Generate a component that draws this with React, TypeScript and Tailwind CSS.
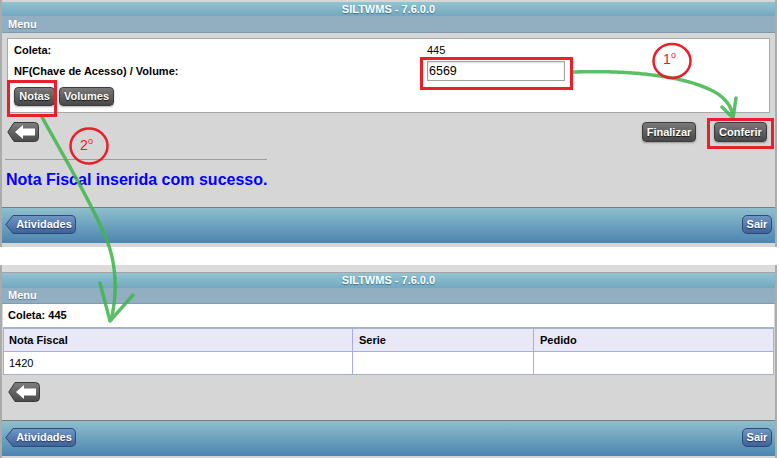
import React from 'react';

function TitleBar({ h, top }: { h: string; top?: boolean }) {
    return (
        <div className={`${h} ${top ? 'border-t border-[#a3a3a3]' : ''} bg-gradient-to-b from-[#93c3d1] to-[#73a8bf] flex items-center justify-center text-[11px] font-bold text-white leading-none [text-shadow:0_1px_1px_#3d6f86]`}>
            SILTWMS - 7.6.0.0
        </div>
    );
}

function MenuBar({ h }: { h: string }) {
    return (
        <div className={`${h} bg-[#92afc1] border-b border-[#7f9bb0] flex items-center pl-[6px] text-[11px] font-bold text-white leading-none [text-shadow:0_1px_1px_#55758a]`}>
            Menu
        </div>
    );
}

function GrayBtn({ label, w, h = 'h-[20px]' }: { label: string; w: string; h?: string }) {
    return (
        <div className={`${w} ${h} rounded-[4px] border border-[#3c3c3c] bg-gradient-to-b from-[#7a7a7a] to-[#484848] flex items-center justify-center text-[11px] font-bold text-white leading-none [text-shadow:0_1px_1px_#111] shadow-[0_1px_2px_rgba(0,0,0,0.3)]`}>
            {label}
        </div>
    );
}

function BackBtn({ id }: { id: string }) {
    return (
        <svg width="32" height="20" viewBox="0 0 32 20">
            <defs>
                <linearGradient id={id} x1="0" y1="0" x2="0" y2="1">
                    <stop offset="0" stopColor="#7e7e7e" />
                    <stop offset="1" stopColor="#4a4a4a" />
                </linearGradient>
            </defs>
            <path d="M0.8 10 L7 0.5 H27.5 Q31.5 0.5 31.5 4.5 V15.5 Q31.5 19.5 27.5 19.5 H7 Z" fill={`url(#${id})`} stroke="#3a3a3a" />
            <polygon points="8,10 16,3 16,6.5 28,6.5 28,13.5 16,13.5 16,17" fill="#ffffff" />
        </svg>
    );
}

function BlueBack({ id }: { id: string }) {
    return (
        <div className="flex h-[19px]">
            <svg width="8" height="19" viewBox="0 0 8 19" className="block">
                <defs>
                    <linearGradient id={id} x1="0" y1="0" x2="0" y2="1">
                        <stop offset="0" stopColor="#7096c4" />
                        <stop offset="1" stopColor="#3f6399" />
                    </linearGradient>
                </defs>
                <polygon points="8,0 0.5,9.5 8,19" fill={`url(#${id})`} />
                <polyline points="8,0.5 0.8,9.5 8,18.5" fill="none" stroke="#2d4b79" />
            </svg>
            <div className="h-[19px] w-[63px] border-y border-r border-[#2d4b79] rounded-r-[5px] bg-gradient-to-b from-[#7096c4] to-[#3f6399] flex items-center justify-center text-[11px] font-bold text-white leading-none [text-shadow:0_1px_1px_#1d3357]">
                Atividades
            </div>
        </div>
    );
}

function Sair() {
    return (
        <div className="w-[30px] h-[19px] rounded-[5px] border border-[#2d4b79] bg-gradient-to-b from-[#7096c4] to-[#3f6399] flex items-center justify-center text-[11px] font-bold text-white leading-none [text-shadow:0_1px_1px_#1d3357]">
            Sair
        </div>
    );
}

function Footer({ id }: { id: string }) {
    return (
        <div className="h-[36px] border-t border-[#7b7b7b] bg-gradient-to-b from-[#8fbfcd] to-[#4b85b0] flex items-start justify-between pt-[7px] pl-[3px] pr-[3px]">
            <BlueBack id={id} />
            <Sair />
        </div>
    );
}

function ScreenOne() {
    return (
        <div className="w-[777px] h-[247px] border-x-2 border-[#ababab] bg-[#d6d6d6] flex flex-col">
            <div className="h-[2px]" />
            <TitleBar h="h-[14px]" />
            <MenuBar h="h-[17px]" />
            <div className="h-[174px] flex flex-col pt-[5px]">
                <div className="ml-[5px] w-[763px] h-[75px] bg-white border border-[#a8a8a8] pt-[3px] pl-[6px] text-[11px] text-black leading-none">
                    <div className="grid grid-cols-[413px_1fr] h-[16px] items-center">
                        <span className="font-bold">Coleta:</span>
                        <span>445</span>
                    </div>
                    <div className="grid grid-cols-[413px_1fr] h-[22px] mt-[2px] items-center">
                        <span className="font-bold">NF(Chave de Acesso) / Volume:</span>
                        <div className="w-[138px] h-[20px] border border-[#a3a3a3] bg-white shadow-[inset_0_1px_2px_rgba(0,0,0,0.15)] flex items-center pl-[1px] text-[12.5px]">
                            6569
                        </div>
                    </div>
                    <div className="flex gap-[4px] mt-[5px]">
                        <GrayBtn label="Notas" w="w-[41px]" h="h-[19px]" />
                        <GrayBtn label="Volumes" w="w-[55px]" h="h-[19px]" />
                    </div>
                </div>
                <div className="flex items-start justify-between pt-[9px] pl-[5px] pr-[8px]">
                    <BackBtn id="bk1" />
                    <div className="flex gap-[18px]">
                        <GrayBtn label="Finalizar" w="w-[54px]" />
                        <GrayBtn label="Conferir" w="w-[53px]" />
                    </div>
                </div>
                <div className="ml-[3px] mt-[17px] w-[262px] h-[1px] bg-[#9c9c9c]" />
                <div className="ml-[4px] mt-[11px] text-[16px] leading-[18px] font-bold text-[#0000ff]">
                    Nota Fiscal inserida com sucesso.
                </div>
            </div>
            <Footer id="at1" />
            <div className="h-[4px]" />
        </div>
    );
}

function ScreenTwo() {
    const cell = 'border-r border-[#a9a9ec] pl-[5px] flex items-center';
    return (
        <div className="w-[777px] h-[193px] border-x-2 border-[#ababab] bg-[#d6d6d6] flex flex-col">
            <div className="h-[7px] bg-[#dcdcdc]" />
            <TitleBar h="h-[16px]" top />
            <MenuBar h="h-[16px]" />
            <div className="mx-[1px] h-[25px] bg-white border-b-2 border-[#a3b5c6] flex items-center pl-[5px] text-[11px] font-bold text-black leading-none">
                Coleta: 445
            </div>
            <div className="mx-[1px] text-[11px] text-black leading-none border-l border-[#a9a9ec]">
                <div className="grid grid-cols-[349px_181px_1fr] h-[23px] bg-[#e8e8f6] border-b border-[#a9a9ec] font-bold">
                    <div className={cell}>Nota Fiscal</div>
                    <div className={`${cell} pl-[6px]`}>Serie</div>
                    <div className={`${cell} pl-[6px]`}>Pedido</div>
                </div>
                <div className="grid grid-cols-[349px_181px_1fr] h-[23px] bg-white border-b border-[#a3b3c6]">
                    <div className={cell}>1420</div>
                    <div className={cell} />
                    <div className={cell} />
                </div>
            </div>
            <div className="h-[45px] pt-[7px] pl-[6px]">
                <BackBtn id="bk2" />
            </div>
            <Footer id="at2" />
            <div className="h-[2px]" />
        </div>
    );
}

function Annotations() {
    const green = '#3fb54c';
    return (
        <svg className="absolute left-0 top-0 pointer-events-none" width="779" height="458" viewBox="0 0 779 458">
            <g fill="none" stroke={green} strokeWidth="3.5" strokeLinecap="round" strokeLinejoin="round" strokeDasharray="2.5 1.2" opacity="0.85">
                <path d="M574 72 C 630 70, 690 76, 718 94 C 728 101, 733 110, 733 118" />
                <path d="M722 107 L733 118 L736 98" />
                <path d="M42 117 C 60 150, 90 200, 106 238 C 116 262, 118 292, 111 320" />
                <path d="M100 283 L110 321 L133 295" />
            </g>
            <g fill="none" stroke="#e8202a" strokeWidth="3">
                <rect x="8.5" y="81.5" width="47" height="34" />
                <rect x="421.5" y="58.5" width="150" height="30" />
                <rect x="708.5" y="119.5" width="64" height="28" />
            </g>
            <g fill="none" stroke="#e8202a" strokeWidth="2.5">
                <ellipse cx="672" cy="61" rx="18.5" ry="17" />
                <ellipse cx="89" cy="146" rx="18.5" ry="17.5" />
            </g>
            <g fill="#e8202a" fontFamily="'Liberation Sans', Arial, sans-serif" fontSize="14">
                <text x="663" y="64">1</text>
                <text x="671" y="58" fontSize="9">o</text>
                <text x="80" y="150">2</text>
                <text x="88" y="144" fontSize="9">o</text>
            </g>
        </svg>
    );
}

export default function App() {
    return (
        <div className="relative w-[779px] h-[458px] bg-white overflow-hidden font-['Liberation_Sans',Arial,sans-serif]">
            <ScreenOne />
            <div className="h-[18px]" />
            <ScreenTwo />
            <Annotations />
        </div>
    );
}
